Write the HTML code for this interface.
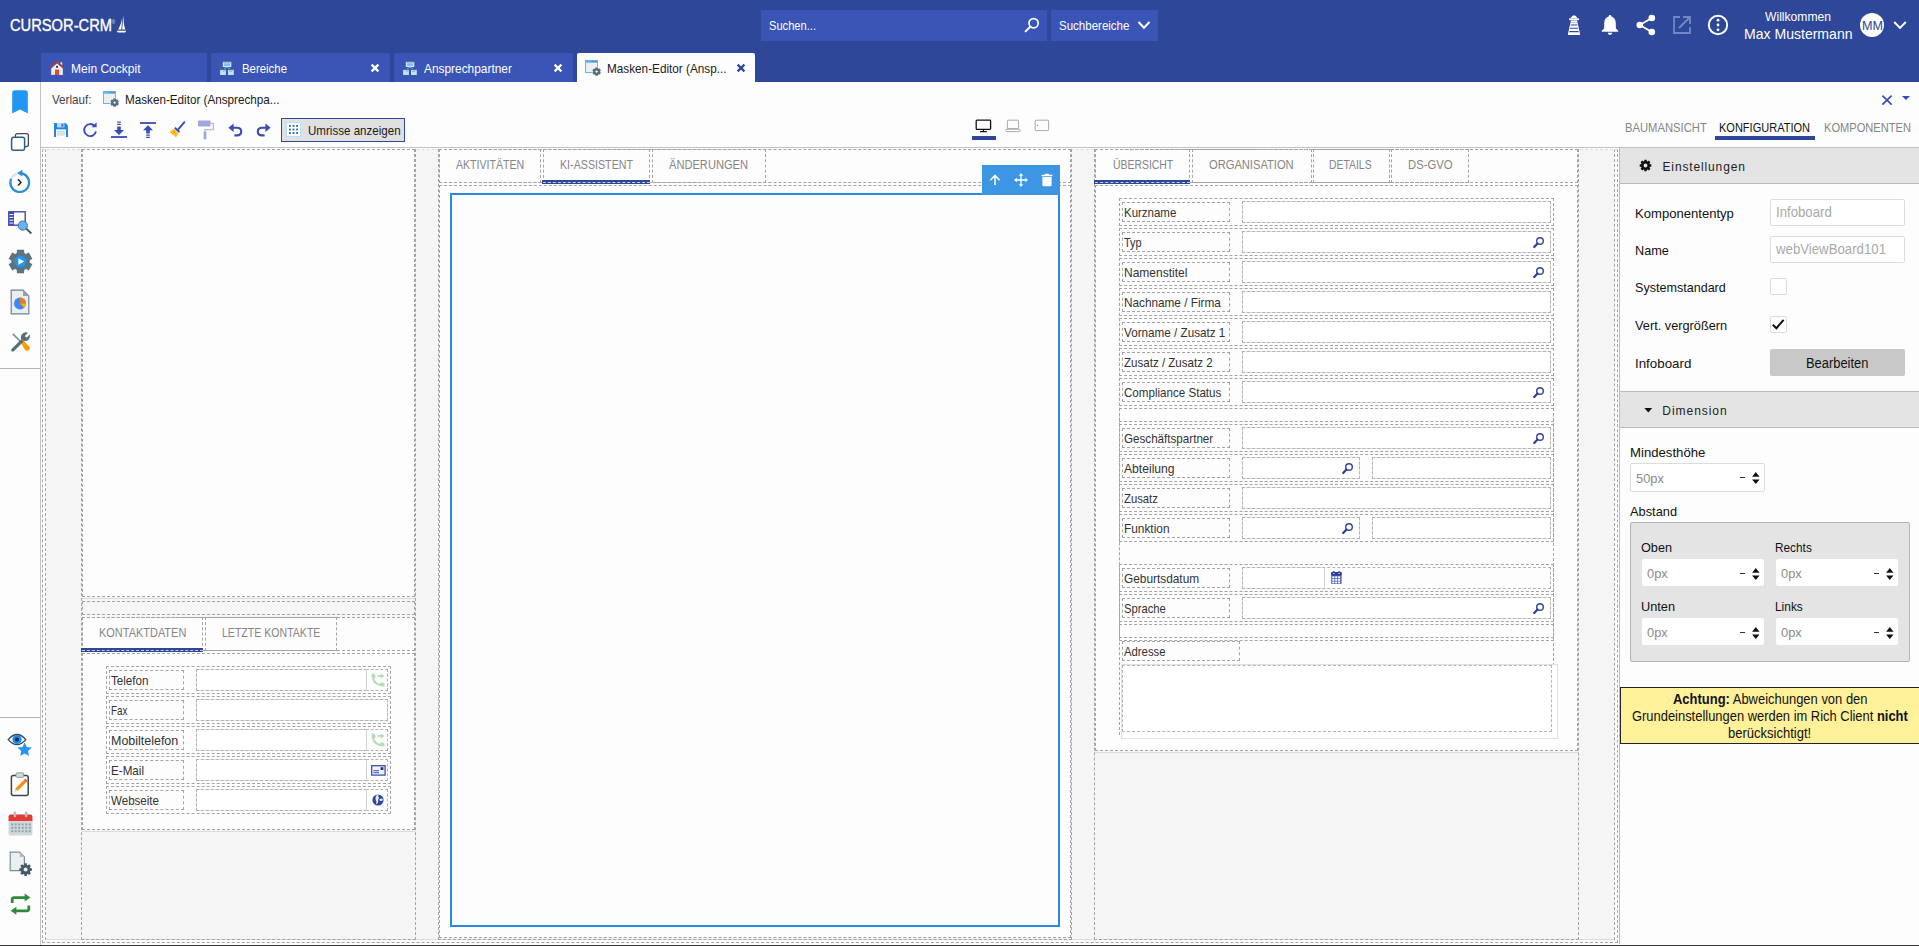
<!DOCTYPE html>
<html lang="de"><head><meta charset="utf-8"><title>CURSOR-CRM Masken-Editor</title><style>
html,body{margin:0;padding:0;}
body{width:1919px;height:946px;overflow:hidden;position:relative;background:#fdfdfd;font-family:"Liberation Sans",sans-serif;}
div,span.t,svg{position:absolute;}
span.t{white-space:nowrap;}
svg{overflow:visible;}
</style></head><body>
<div style="left:0px;top:0px;width:1919px;height:82px;background:#2e4799;"></div>
<span class="t" style="top:13px;line-height:26px;height:26px;font-size:16px;color:#fff;transform:scaleX(0.9181);transform-origin:0 50%;left:9.6px;-webkit-text-stroke:0.35px #fff;">CURSOR-CRM</span>
<span class="t" style="top:12px;line-height:20px;height:20px;font-size:5px;color:#dfe4f5;left:111.5px;">®</span>
<svg style="left:116px;top:14px;" width="11" height="20" viewBox="0 0 11 20"><g transform="translate(1.6 0) skewX(-5) scale(0.82 1)"><path d="M7.2 0.5 C7.6 6 8.8 11 11 15.6 L7.2 15.6 Z M6.2 3.5 L6.2 15.6 L2.4 15.6 C4.4 12 5.6 8 6.2 3.5 Z M0.8 16.8 L12.4 16.8 L11 18.6 L2.2 18.6 Z" fill="#fff"/></g></svg>
<div style="left:761px;top:10px;width:286px;height:31px;background:#3a55b6;"></div>
<span class="t" style="top:16px;line-height:20px;height:20px;font-size:13px;color:#fff;transform:scaleX(0.8557);transform-origin:0 50%;left:769px;">Suchen...</span>
<svg style="left:1024px;top:17px;" width="16" height="16" viewBox="0 0 16 16"><circle cx="9.6" cy="6.2" r="4.6" fill="none" stroke="#fff" stroke-width="1.7"/><path d="M6.4 9.6 L1.6 14.4" stroke="#fff" stroke-width="2" stroke-linecap="round"/></svg>
<div style="left:1051px;top:10px;width:107px;height:31px;background:#3a55b6;"></div>
<span class="t" style="top:16px;line-height:20px;height:20px;font-size:13px;color:#fff;transform:scaleX(0.8855);transform-origin:0 50%;left:1059px;">Suchbereiche</span>
<svg style="left:1137px;top:20px;" width="14" height="10" viewBox="0 0 14 10"><path d="M1.5 2 L7 7.8 L12.5 2" fill="none" stroke="#fff" stroke-width="2"/></svg>
<svg style="left:1566px;top:14px;" width="16" height="22" viewBox="0 0 16 22"><path d="M4.4 4.2 Q8 -1.8 11.6 4.2 Z" fill="#fff"/><rect x="3" y="4.4" width="10" height="1.6" fill="#fff"/><rect x="4.6" y="6.4" width="6.8" height="2.2" fill="#fff"/><path d="M4.4 8.8 H11.6 L14.2 21 H1.8 Z" fill="#fff"/><path d="M4.6 11 H11.4 M4 14.2 H12 M3.4 17.6 H12.6" stroke="#2e4799" stroke-width="1.1"/></svg>
<svg style="left:1600px;top:14px;" width="20" height="22" viewBox="0 0 20 22"><path d="M10 1 C10.9 1 11.4 1.6 11.4 2.6 C14.4 3.4 15.8 6 15.8 9.4 V14.2 L18.2 16.8 V17.8 H1.8 V16.8 L4.2 14.2 V9.4 C4.2 6 5.6 3.4 8.6 2.6 C8.6 1.6 9.1 1 10 1 Z M7.8 18.8 H12.2 C12.2 20.1 11.2 21 10 21 C8.8 21 7.8 20.1 7.8 18.8Z" fill="#fff"/></svg>
<svg style="left:1635px;top:13px;" width="22" height="24" viewBox="0 0 22 24"><circle cx="4.8" cy="12" r="3.3" fill="#fff"/><circle cx="16.8" cy="5" r="3.3" fill="#fff"/><circle cx="16.8" cy="19" r="3.3" fill="#fff"/><path d="M4.8 12 L16.8 5 M4.8 12 L16.8 19" stroke="#fff" stroke-width="1.8"/></svg>
<svg style="left:1672px;top:15px;" width="20" height="20" viewBox="0 0 20 20"><path d="M8 2 H2 V18 H18 V12" fill="none" stroke="#7486c6" stroke-width="1.8"/><path d="M11 2 H18 V9 M18 2 L7 13" fill="none" stroke="#7486c6" stroke-width="1.8"/></svg>
<svg style="left:1707px;top:14px;" width="22" height="22" viewBox="0 0 22 22"><circle cx="11" cy="11" r="9.2" fill="none" stroke="#fff" stroke-width="1.9"/><circle cx="11" cy="6.2" r="1.4" fill="#fff"/><circle cx="11" cy="11" r="1.4" fill="#fff"/><circle cx="11" cy="15.8" r="1.4" fill="#fff"/></svg>
<span class="t" style="top:7px;line-height:20px;height:20px;font-size:13px;color:#fff;transform:scaleX(0.9324);transform-origin:0 50%;left:1765.2px;">Willkommen</span>
<span class="t" style="top:21px;line-height:26px;height:26px;font-size:15px;color:#fff;transform:scaleX(0.9364);transform-origin:0 50%;left:1743.55px;">Max Mustermann</span>
<div style="left:1860px;top:13px;width:24px;height:24px;background:#fff;border-radius:50%;"></div>
<span class="t" style="top:16px;line-height:20px;height:20px;font-size:13px;color:#2e4799;transform:scaleX(0.9696);transform-origin:0 50%;left:1861.5px;">MM</span>
<svg style="left:1893px;top:20px;" width="14" height="10" viewBox="0 0 14 10"><path d="M1.2 2 L7 7.8 L12.8 2" fill="none" stroke="#fff" stroke-width="1.9"/></svg>
<div style="left:41px;top:53px;width:166px;height:29px;background:#3a55b6;border-radius:2px 2px 0 0;"></div>
<div style="left:211px;top:53px;width:179px;height:29px;background:#3a55b6;border-radius:2px 2px 0 0;"></div>
<div style="left:394px;top:53px;width:179px;height:29px;background:#3a55b6;border-radius:2px 2px 0 0;"></div>
<div style="left:577px;top:53px;width:178px;height:29px;background:#fdfdfd;border-radius:2px 2px 0 0;"></div>
<svg style="left:49px;top:60px;" width="16" height="16" viewBox="0 0 16 16"><path d="M11.4 2.2 H13.2 V5.4 L11.4 3.8Z" fill="#e8eaf6"/><path d="M2.2 8.4 L8 3.2 L13.8 8.4 V15 H2.2Z" fill="#eceff8"/><rect x="2.2" y="13.6" width="11.6" height="1.4" fill="#d6daec"/><path d="M8 0.8 L0.8 7.4 L1.8 8.5 L8 2.9 L14.2 8.5 L15.2 7.4 Z" fill="#c0392b"/><rect x="6" y="9.6" width="4" height="5.4" fill="#e64a19"/><rect x="7" y="5.8" width="2" height="2" fill="#0d47a1"/></svg>
<span class="t" style="top:59px;line-height:20px;height:20px;font-size:13px;color:#fff;transform:scaleX(0.925);transform-origin:0 50%;left:71px;">Mein Cockpit</span>
<svg style="left:220px;top:61px;" width="14" height="14" viewBox="0 0 14 14"><rect x="2.8" y="0.2" width="8.5" height="5.7" rx="0.5" fill="#d4eaff"/><rect x="2.8" y="0.2" width="8.5" height="1.1" fill="#4d6069"/><rect x="3.8" y="1.9" width="6.5" height="3" fill="#90caf9"/><rect x="4.2" y="3.5" width="5.7" height="0.9" fill="#64b5f6"/><path d="M7 6 L4 7.8 M7 6 L10 7.8" stroke="#64b5f6" stroke-width="0.9"/><rect x="0.1" y="8.1" width="5.8" height="5.8" rx="0.5" fill="#c4e2fc"/><rect x="0.1" y="8.1" width="5.8" height="1" fill="#4d6069"/><rect x="3" y="9.7" width="1.8" height="1" fill="#64b5f6"/><rect x="8" y="8.1" width="5.8" height="5.8" rx="0.5" fill="#c4e2fc"/><rect x="8" y="8.1" width="5.8" height="1" fill="#4d6069"/><rect x="9.2" y="9.7" width="3" height="1" fill="#64b5f6"/></svg>
<span class="t" style="top:59px;line-height:20px;height:20px;font-size:13px;color:#fff;transform:scaleX(0.877);transform-origin:0 50%;left:242px;">Bereiche</span>
<svg style="left:403px;top:61px;" width="14" height="14" viewBox="0 0 14 14"><rect x="2.8" y="0.2" width="8.5" height="5.7" rx="0.5" fill="#d4eaff"/><rect x="2.8" y="0.2" width="8.5" height="1.1" fill="#4d6069"/><rect x="3.8" y="1.9" width="6.5" height="3" fill="#90caf9"/><rect x="4.2" y="3.5" width="5.7" height="0.9" fill="#64b5f6"/><path d="M7 6 L4 7.8 M7 6 L10 7.8" stroke="#64b5f6" stroke-width="0.9"/><rect x="0.1" y="8.1" width="5.8" height="5.8" rx="0.5" fill="#c4e2fc"/><rect x="0.1" y="8.1" width="5.8" height="1" fill="#4d6069"/><rect x="3" y="9.7" width="1.8" height="1" fill="#64b5f6"/><rect x="8" y="8.1" width="5.8" height="5.8" rx="0.5" fill="#c4e2fc"/><rect x="8" y="8.1" width="5.8" height="1" fill="#4d6069"/><rect x="9.2" y="9.7" width="3" height="1" fill="#64b5f6"/></svg>
<span class="t" style="top:59px;line-height:20px;height:20px;font-size:13px;color:#fff;transform:scaleX(0.9146);transform-origin:0 50%;left:424px;">Ansprechpartner</span>
<svg style="left:370px;top:63px;" width="10" height="10" viewBox="0 0 10 10"><path d="M1.6 1.6 L8.4 8.4 M8.4 1.6 L1.6 8.4" stroke="#fff" stroke-width="2.2"/></svg>
<svg style="left:553px;top:63px;" width="10" height="10" viewBox="0 0 10 10"><path d="M1.6 1.6 L8.4 8.4 M8.4 1.6 L1.6 8.4" stroke="#fff" stroke-width="2.2"/></svg>
<svg style="left:736px;top:63px;" width="10" height="10" viewBox="0 0 10 10"><path d="M1.6 1.6 L8.4 8.4 M8.4 1.6 L1.6 8.4" stroke="#2e4799" stroke-width="2.2"/></svg>
<svg style="left:585px;top:60px;" width="17" height="17" viewBox="0 0 17 17"><rect x="0.5" y="0.5" width="12" height="12" fill="#eceff1" stroke="#64b5f6" stroke-width="1"/><rect x="0" y="0" width="13" height="2.8" fill="#64b5f6"/><rect x="10.4" y="0.8" width="1.3" height="1.3" fill="#f44336"/><rect x="8.4" y="0.9" width="1.1" height="1.1" fill="#1e88e5"/><rect x="6.6" y="0.9" width="1.1" height="1.1" fill="#1e88e5"/><path d="M10.01 8.26 L10.27 7.09 L12.93 7.09 L13.19 8.26 L13.70 8.55 L14.84 8.19 L16.17 10.50 L15.29 11.31 L15.29 11.89 L16.17 12.70 L14.84 15.01 L13.70 14.65 L13.19 14.94 L12.93 16.11 L10.27 16.11 L10.01 14.94 L9.50 14.65 L8.36 15.01 L7.03 12.70 L7.91 11.89 L7.91 11.31 L7.03 10.50 L8.36 8.19 L9.50 8.55Z" fill="#546e7a" stroke="#fdfdfd" stroke-width="0.6"/><circle cx="11.6" cy="11.6" r="1.15" fill="#fdfdfd"/></svg>
<span class="t" style="top:59px;line-height:20px;height:20px;font-size:13px;color:#222;transform:scaleX(0.9038);transform-origin:0 50%;left:607px;">Masken-Editor (Ansp...</span>
<div style="left:0px;top:82px;width:1919px;height:864px;background:#fdfdfd;"></div>
<div style="left:40px;top:82px;width:1px;height:864px;background:#c2c2c2;"></div>
<div style="left:0px;top:945px;width:1919px;height:1px;background:#333;"></div>
<div style="left:41px;top:147px;width:1878px;height:1px;background:#c2c2c2;"></div>
<div style="left:0px;top:368px;width:40px;height:1px;background:#b4b4b4;"></div>
<div style="left:0px;top:717px;width:40px;height:1px;background:#b4b4b4;"></div>
<svg style="left:12px;top:90px;" width="16" height="24" viewBox="0 0 16 24"><path d="M0.2 3 Q0.2 0.2 3 0.2 H13 Q15.8 0.2 15.8 3 V23.6 L8 19.6 L0.2 23.6Z" fill="#2196f3"/></svg>
<svg style="left:10px;top:132px;" width="20" height="20" viewBox="0 0 20 20"><rect x="5.4" y="1.6" width="13" height="13" rx="2" fill="none" stroke="#4a4a4a" stroke-width="1.3"/><rect x="1.6" y="5.2" width="13" height="13" rx="2" fill="#fdfdfd" stroke="#2c5d8f" stroke-width="1.5"/></svg>
<svg style="left:8px;top:169px;" width="24" height="25" viewBox="0 0 24 25"><path d="M11.2 4.2 A9.4 9.4 0 1 1 3.2 9.6" fill="none" stroke="#2a8fd4" stroke-width="2.2"/><path d="M3.2 9.6 A9.4 9.4 0 0 1 9 4.6" fill="none" stroke="#cfe6f7" stroke-width="2.2"/><path d="M14.4 0.8 L9 4 L14.4 7.4 Z" fill="#2a8fd4"/><path d="M10 10.2 L13 13.4 L10 16.6" fill="none" stroke="#222" stroke-width="1.4"/></svg>
<svg style="left:8px;top:211px;" width="25" height="24" viewBox="0 0 25 24"><rect x="0.8" y="0.8" width="16.4" height="13.4" fill="#fdfdfd" stroke="#3f48b5" stroke-width="1.4"/><rect x="0.8" y="0.8" width="5.2" height="13.4" fill="#3f48b5"/><path d="M1.4 3.6 H5.4 M1.4 6.4 H5.4 M1.4 9.2 H5.4 M1.4 12 H5.4" stroke="#fff" stroke-width="1"/><path d="M18 17.6 L23.4 22.4" stroke="#455a64" stroke-width="2"/><circle cx="14.8" cy="14.6" r="4.6" fill="#64b5f6" stroke="#455a64" stroke-width="0.8"/></svg>
<svg style="left:7.5px;top:249px;" width="25" height="25" viewBox="0 0 25 25"><path d="M8.76 4.10 L8.97 0.82 L16.03 0.82 L16.24 4.10 L17.91 5.06 L20.85 3.61 L24.38 9.71 L21.65 11.54 L21.65 13.46 L24.38 15.29 L20.85 21.39 L17.91 19.94 L16.24 20.90 L16.03 24.18 L8.97 24.18 L8.76 20.90 L7.09 19.94 L4.15 21.39 L0.62 15.29 L3.35 13.46 L3.35 11.54 L0.62 9.71 L4.15 3.61 L7.09 5.06Z" fill="#5a7482"/><circle cx="12.5" cy="12.5" r="5.8" fill="#2196f3"/><path d="M10.4 9.2 L16.2 12.5 L10.4 15.8Z" fill="#fff"/></svg>
<svg style="left:10px;top:289px;" width="20" height="26" viewBox="0 0 20 26"><path d="M1.2 1.2 H13 L18.8 7 V24.8 H1.2Z" fill="#e8eef4" stroke="#6d8496" stroke-width="1.2"/><path d="M13 1.2 V7 H18.8Z" fill="#90a4ae"/><circle cx="10" cy="14.6" r="6" fill="#4285f4"/><path d="M10 14.6 V8.6 A6 6 0 0 1 16 14.6Z" fill="#e67e22"/><path d="M10 14.6 H16 A6 6 0 0 1 14.2 18.8Z" fill="#f4b400"/></svg>
<svg style="left:10px;top:331px;" width="21" height="22" viewBox="0 0 21 22"><path d="M2.2 3.4 L3.4 2.2 L10.6 9.4 L9.4 10.6Z" fill="#78909c"/><path d="M9.6 10 L11.8 7.8 L19.4 15.4 Q20.4 17.6 18.8 19.2 Q17.2 20.4 15.2 19.2Z" fill="#ffa000"/><path d="M1.6 18 L11.4 8.2 L13.6 10.4 L3.8 20.2 Q2.4 21 1.4 20 Q0.8 19 1.6 18Z" fill="#546e7a"/><path d="M11 8 Q10.2 4 13.4 2 Q15.6 0.8 18 1.8 L14.8 5 L16.6 6.8 L19.8 3.6 Q20.8 6.6 18.6 8.8 Q16.6 10.6 13.6 9.8Z" fill="#546e7a"/></svg>
<svg style="left:7px;top:731px;" width="27" height="26" viewBox="0 0 27 26"><path d="M1.2 8.6 Q10 -1.6 18.8 8.6 Q10 18.6 1.2 8.6Z" fill="#fdfdfd" stroke="#37474f" stroke-width="1.3"/><circle cx="10" cy="8.4" r="4.6" fill="#1e88e5"/><circle cx="10" cy="8.4" r="2" fill="#0d2b4a"/><path d="M17.6 11.4 L19.7 16 L24.8 16.6 L21 20 L22 25 L17.6 22.5 L13.2 25 L14.2 20 L10.4 16.6 L15.5 16Z" fill="#2196f3"/></svg>
<svg style="left:10px;top:772px;" width="20" height="25" viewBox="0 0 20 25"><rect x="1.4" y="3.6" width="16.8" height="19.8" rx="2" fill="#fdfdfd" stroke="#37474f" stroke-width="1.5"/><rect x="6" y="0.8" width="7.6" height="4.6" rx="1.2" fill="#cfd8dc" stroke="#78909c" stroke-width="0.8"/><path d="M4.6 19.6 L5.4 16.6 L14.2 7.8 L16.4 10 L7.6 18.8Z" fill="#fb8c00"/><path d="M4.6 19.6 L5.4 16.6 L7.6 18.8Z" fill="#ffe0b2"/><path d="M14.2 7.8 L15.2 6.8 L17.4 9 L16.4 10Z" fill="#e53935"/></svg>
<svg style="left:8px;top:811px;" width="25" height="25" viewBox="0 0 25 25"><rect x="0.6" y="3.4" width="23.8" height="21" rx="2.2" fill="#cfd8dc"/><path d="M0.6 10 V5.6 Q0.6 3.4 2.8 3.4 H22.2 Q24.4 3.4 24.4 5.6 V10Z" fill="#e53935"/><rect x="5.6" y="0.6" width="2.6" height="5.6" rx="1.2" fill="#b0bec5"/><rect x="16.8" y="0.6" width="2.6" height="5.6" rx="1.2" fill="#b0bec5"/><rect x="3.2" y="12.4" width="2" height="2" fill="#90a4ae"/><rect x="6.7" y="12.4" width="2" height="2" fill="#90a4ae"/><rect x="10.2" y="12.4" width="2" height="2" fill="#90a4ae"/><rect x="13.7" y="12.4" width="2" height="2" fill="#90a4ae"/><rect x="17.2" y="12.4" width="2" height="2" fill="#90a4ae"/><rect x="20.7" y="12.4" width="2" height="2" fill="#90a4ae"/><rect x="3.2" y="15.8" width="2" height="2" fill="#90a4ae"/><rect x="6.7" y="15.8" width="2" height="2" fill="#90a4ae"/><rect x="10.2" y="15.8" width="2" height="2" fill="#90a4ae"/><rect x="13.7" y="15.8" width="2" height="2" fill="#90a4ae"/><rect x="17.2" y="15.8" width="2" height="2" fill="#90a4ae"/><rect x="20.7" y="15.8" width="2" height="2" fill="#90a4ae"/><rect x="3.2" y="19.2" width="2" height="2" fill="#90a4ae"/><rect x="6.7" y="19.2" width="2" height="2" fill="#90a4ae"/><rect x="10.2" y="19.2" width="2" height="2" fill="#90a4ae"/><rect x="13.7" y="19.2" width="2" height="2" fill="#90a4ae"/><rect x="17.2" y="19.2" width="2" height="2" fill="#90a4ae"/><rect x="20.7" y="19.2" width="2" height="2" fill="#90a4ae"/></svg>
<svg style="left:9px;top:851px;" width="25" height="26" viewBox="0 0 25 26"><path d="M1.2 1.2 H10.6 L15.4 6 V19.6 H1.2Z" fill="#eceff1" stroke="#78909c" stroke-width="1.2"/><path d="M10.6 1.2 V6 H15.4Z" fill="#b0bec5"/><g transform="translate(16.6 18.6)"><path d="M-1.33 -4.72 L-1.25 -6.28 L1.25 -6.28 L1.33 -4.72 L2.39 -4.28 L3.56 -5.32 L5.32 -3.56 L4.28 -2.39 L4.72 -1.33 L6.28 -1.25 L6.28 1.25 L4.72 1.33 L4.28 2.39 L5.32 3.56 L3.56 5.32 L2.39 4.28 L1.33 4.72 L1.25 6.28 L-1.25 6.28 L-1.33 4.72 L-2.39 4.28 L-3.56 5.32 L-5.32 3.56 L-4.28 2.39 L-4.72 1.33 L-6.28 1.25 L-6.28 -1.25 L-4.72 -1.33 L-4.28 -2.39 L-5.32 -3.56 L-3.56 -5.32 L-2.39 -4.28Z" fill="#455a64"/><circle r="2" fill="#eceff1"/></g></svg>
<svg style="left:9px;top:893px;" width="23" height="23" viewBox="0 0 23 23"><path d="M3.2 10 V6.6 Q3.2 4.6 5.2 4.6 H17" fill="none" stroke="#2e8b3a" stroke-width="2.8"/><path d="M15.6 0.6 L21.4 4.6 L15.6 8.6Z" fill="#2e8b3a"/><path d="M19.8 12.4 V15.8 Q19.8 17.8 17.8 17.8 H6" fill="none" stroke="#2e8b3a" stroke-width="2.8"/><path d="M7.4 13.8 L1.6 17.8 L7.4 21.8Z" fill="#2e8b3a"/></svg>
<span class="t" style="top:90px;line-height:20px;height:20px;font-size:13px;color:#444;transform:scaleX(0.8937);transform-origin:0 50%;left:52px;">Verlauf:</span>
<svg style="left:103px;top:91px;" width="17" height="17" viewBox="0 0 17 17"><rect x="0.5" y="0.5" width="12" height="12" fill="#eceff1" stroke="#64b5f6" stroke-width="1"/><rect x="0" y="0" width="13" height="2.8" fill="#64b5f6"/><rect x="10.4" y="0.8" width="1.3" height="1.3" fill="#f44336"/><rect x="8.4" y="0.9" width="1.1" height="1.1" fill="#1e88e5"/><rect x="6.6" y="0.9" width="1.1" height="1.1" fill="#1e88e5"/><path d="M10.01 8.26 L10.27 7.09 L12.93 7.09 L13.19 8.26 L13.70 8.55 L14.84 8.19 L16.17 10.50 L15.29 11.31 L15.29 11.89 L16.17 12.70 L14.84 15.01 L13.70 14.65 L13.19 14.94 L12.93 16.11 L10.27 16.11 L10.01 14.94 L9.50 14.65 L8.36 15.01 L7.03 12.70 L7.91 11.89 L7.91 11.31 L7.03 10.50 L8.36 8.19 L9.50 8.55Z" fill="#546e7a" stroke="#fdfdfd" stroke-width="0.6"/><circle cx="11.6" cy="11.6" r="1.15" fill="#fdfdfd"/></svg>
<span class="t" style="top:90px;line-height:20px;height:20px;font-size:13px;color:#1a1a1a;transform:scaleX(0.899);transform-origin:0 50%;left:125px;">Masken-Editor (Ansprechpa...</span>
<svg style="left:1881px;top:94px;" width="12" height="12" viewBox="0 0 12 12"><path d="M1.4 1.6 L10.6 10.6 M10.6 1.6 L1.4 10.6" stroke="#3848b8" stroke-width="1.6"/></svg>
<svg style="left:1902px;top:96px;" width="8" height="4" viewBox="0 0 8 4"><path d="M0 0 H8 L4 4Z" fill="#3848b8"/></svg>
<svg style="left:54px;top:123px;" width="14" height="14" viewBox="0 0 14 14"><path d="M0 0 H11.6 L14 2.4 V14 H0Z" fill="#1e88e5"/><rect x="3" y="0" width="7.4" height="4.4" fill="#bbdefb"/><rect x="7.4" y="0.6" width="2" height="3.2" fill="#5c6bc0"/><rect x="2" y="6.4" width="10" height="7.6" fill="#fff"/><path d="M3 8.4 H11 M3 10.2 H11 M3 12 H11" stroke="#b0bec5" stroke-width="0.8"/></svg>
<svg style="left:82px;top:121px;" width="16" height="17" viewBox="0 0 16 17"><path d="M12.6 5 A6 6 0 1 0 14 10.6" fill="none" stroke="#3a4bb5" stroke-width="1.9"/><path d="M9.6 6.2 H14.6 V1.2Z" fill="#3a4bb5"/></svg>
<svg style="left:111px;top:121px;" width="16" height="18" viewBox="0 0 16 18"><path d="M0 16 H16" stroke="#3a4bb5" stroke-width="1.8"/><path d="M6.2 5.6 H9.8 V9 H13 L8 14 L3 9 H6.2Z" fill="#3a4bb5"/><path d="M6.2 1.2 H9.8 M6.2 3.4 H9.8" stroke="#3a4bb5" stroke-width="1.2"/></svg>
<svg style="left:140px;top:121px;" width="16" height="18" viewBox="0 0 16 18"><path d="M0 2 H16" stroke="#3a4bb5" stroke-width="1.8"/><path d="M8 4.2 L13 9.2 H9.8 V12.4 H6.2 V9.2 H3Z" fill="#3a4bb5"/><path d="M6.2 14.2 H9.8 M6.2 16.4 H9.8" stroke="#3a4bb5" stroke-width="1.2"/></svg>
<svg style="left:169px;top:121px;" width="17" height="18" viewBox="0 0 17 18"><path d="M15.4 1.2 L9.2 8.4" stroke="#3a4bb5" stroke-width="1.9" stroke-linecap="round"/><path d="M6.6 6 L11.2 10.4 L9.8 11.8 L5.2 7.4Z" fill="#3a4bb5"/><path d="M4.8 7.8 L9.4 12.2 L7 16.4 L0.6 10.4Z" fill="#fbc02d"/><path d="M2.4 11.4 L4 13 M4.2 10 L6.4 12.2" stroke="#f57f17" stroke-width="0.8"/></svg>
<svg style="left:197px;top:120px;" width="18" height="20" viewBox="0 0 18 20"><rect x="1" y="0.6" width="12.6" height="6" rx="1" fill="#9fa8da"/><path d="M13.6 3.4 H16.4 V9.6 H8 V12" fill="none" stroke="#b4bbe6" stroke-width="1.4"/><rect x="6.6" y="11.4" width="2.8" height="8" rx="1" fill="#9fa8da"/></svg>
<svg style="left:228px;top:123px;" width="15" height="14" viewBox="0 0 15 14"><path d="M4.6 4.8 H9 Q13.2 4.8 13.2 8.6 Q13.2 12.4 9 12.4 H6.4" fill="none" stroke="#3a4bb5" stroke-width="2.1"/><path d="M5.6 0.6 V9 L0.4 4.8Z" fill="#3a4bb5"/></svg>
<svg style="left:256px;top:123px;" width="15" height="14" viewBox="0 0 15 14"><path d="M10.4 4.8 H6 Q1.8 4.8 1.8 8.6 Q1.8 12.4 6 12.4 H8.6" fill="none" stroke="#3a4bb5" stroke-width="2.1"/><path d="M9.4 0.6 V9 L14.6 4.8Z" fill="#3a4bb5"/></svg>
<div style="left:281px;top:118px;width:124px;height:24px;background:#e0e0e0;border:1px solid #2e4799;box-sizing:border-box;"></div>
<svg style="left:286px;top:122px;" width="15" height="15" viewBox="0 0 15 15"><rect x="0.5" y="0.5" width="14" height="14" fill="#fff" stroke="#bbdefb" stroke-width="1"/><rect x="3.0" y="3.0" width="1.8" height="1.8" fill="#1565c0"/><rect x="6.6" y="3.0" width="1.8" height="1.8" fill="#1565c0"/><rect x="10.2" y="3.0" width="1.8" height="1.8" fill="#1565c0"/><rect x="3.0" y="6.6" width="1.8" height="1.8" fill="#1565c0"/><rect x="6.6" y="6.6" width="1.8" height="1.8" fill="#1565c0"/><rect x="10.2" y="6.6" width="1.8" height="1.8" fill="#1565c0"/><rect x="3.0" y="10.2" width="1.8" height="1.8" fill="#1565c0"/><rect x="6.6" y="10.2" width="1.8" height="1.8" fill="#1565c0"/><rect x="10.2" y="10.2" width="1.8" height="1.8" fill="#1565c0"/></svg>
<span class="t" style="top:121px;line-height:20px;height:20px;font-size:13px;color:#1a1a1a;transform:scaleX(0.89);transform-origin:0 50%;left:308px;">Umrisse anzeigen</span>
<svg style="left:975px;top:119px;" width="17" height="14" viewBox="0 0 17 14"><rect x="1.2" y="1.2" width="14.4" height="9.2" rx="0.8" fill="none" stroke="#111" stroke-width="1.3"/><path d="M8.4 10.4 V12.4 M5 12.6 H11.8" stroke="#111" stroke-width="1.2"/></svg>
<div style="left:972px;top:136px;width:24px;height:4px;background:#2e4799;"></div>
<svg style="left:1005px;top:119px;" width="16" height="14" viewBox="0 0 16 14"><rect x="2.4" y="1.2" width="11.2" height="8.4" rx="0.6" fill="none" stroke="#aaa" stroke-width="1"/><rect x="0.8" y="10.2" width="14.4" height="2.4" rx="1.2" fill="none" stroke="#aaa" stroke-width="1"/></svg>
<svg style="left:1034px;top:119px;" width="16" height="14" viewBox="0 0 16 14"><rect x="1.2" y="1.2" width="13.4" height="10.4" rx="0.8" fill="none" stroke="#aaa" stroke-width="1"/><circle cx="3.4" cy="6.4" r="0.6" fill="#888"/></svg>
<span class="t" style="top:118px;line-height:20px;height:20px;font-size:12.5px;color:#858585;transform:scaleX(0.8991);transform-origin:0 50%;left:1624.7px;">BAUMANSICHT</span>
<span class="t" style="top:118px;line-height:20px;height:20px;font-size:12.5px;color:#111;transform:scaleX(0.8814);transform-origin:0 50%;left:1719.3px;">KONFIGURATION</span>
<span class="t" style="top:118px;line-height:20px;height:20px;font-size:12.5px;color:#858585;transform:scaleX(0.8884);transform-origin:0 50%;left:1823.6px;">KOMPONENTEN</span>
<div style="left:1715px;top:136px;width:100px;height:4px;background:#2e4799;"></div>
<div style="left:46px;top:150px;width:1568px;height:789px;background:#f5f5f5;"></div>
<div style="left:42px;top:149px;width:1576px;height:794px;border:1px dashed #a4a4a4;box-sizing:border-box;border-top-color:#dcdcdc;"></div>
<div style="left:45px;top:149px;width:1570px;height:791px;border:1px dashed #a4a4a4;box-sizing:border-box;border-top-color:transparent;"></div>
<div style="left:46px;top:939px;width:1568px;height:1px;background:#dcdcdc;"></div>
<div style="left:81px;top:149px;width:335px;height:791px;border:1px dashed #a4a4a4;box-sizing:border-box;"></div>
<div style="left:82px;top:149px;width:333px;height:448px;border:1px dashed #a4a4a4;box-sizing:border-box;background:#fdfdfd;"></div>
<div style="left:82px;top:598px;width:333px;height:1px;background:#dcdcdc;"></div>
<div style="left:82px;top:601px;width:333px;height:14px;border:1px dashed #a4a4a4;box-sizing:border-box;"></div>
<div style="left:82px;top:617px;width:333px;height:213px;background:#fdfdfd;"></div>
<div style="left:82px;top:617px;width:333px;height:34px;border:1px dashed #a4a4a4;box-sizing:border-box;background:#fdfdfd;"></div>
<div style="left:82px;top:617px;width:121px;height:34px;border:1px dashed #a4a4a4;box-sizing:border-box;"></div>
<span class="t" style="top:623px;line-height:20px;height:20px;font-size:12.5px;color:#858585;transform:scaleX(0.877);transform-origin:0 50%;left:98.7px;">KONTAKTDATEN</span>
<div style="left:81px;top:648px;width:122px;height:4px;background:#2e4799;"></div>
<div style="left:82px;top:650px;width:121px;height:0px;border-top:1px dashed #c9cde0;"></div>
<div style="left:205px;top:617px;width:132px;height:34px;border:1px dashed #a4a4a4;box-sizing:border-box;"></div>
<span class="t" style="top:623px;line-height:20px;height:20px;font-size:12.5px;color:#858585;transform:scaleX(0.845);transform-origin:0 50%;left:221.6px;">LETZTE KONTAKTE</span>
<div style="left:82px;top:653px;width:333px;height:177px;border:1px dashed #a4a4a4;box-sizing:border-box;"></div>
<div style="left:82px;top:831px;width:333px;height:1px;background:#dcdcdc;"></div>
<div style="left:106px;top:666px;width:285px;height:28px;border:1px dashed #a4a4a4;box-sizing:border-box;"></div>
<div style="left:109px;top:670px;width:75px;height:20px;border:1px dashed #a4a4a4;box-sizing:border-box;"></div>
<span class="t" style="top:671px;line-height:20px;height:20px;font-size:13px;color:#333;transform:scaleX(0.8946);transform-origin:0 50%;left:111px;">Telefon</span>
<div style="left:196px;top:669px;width:171px;height:22px;background:#fff;border:1px solid #e2e2e2;box-sizing:border-box;"></div>
<div style="left:196px;top:669px;width:171px;height:22px;border:1px dashed #b4b4b4;box-sizing:border-box;"></div>
<div style="left:366px;top:669px;width:22px;height:22px;border-left:1px solid #d2d2d2;box-sizing:border-box;"></div>
<div style="left:366px;top:669px;width:22px;height:22px;border:1px dashed #b4b4b4;box-sizing:border-box;border-left-color:transparent;"></div>
<svg style="left:371px;top:672.6px;" width="14" height="14" viewBox="0 0 14 14"><path d="M0.6 0.8 H3.9 L4.7 4.3 L3 5.7 Q4.6 9.2 8.6 11 L10 9.3 L13.4 10.1 V13.4 Q7 13.6 3.4 10 Q0.4 6.8 0.6 0.8Z" fill="#b4ddb6"/><path d="M6.6 3 H10.4" stroke="#b4ddb6" stroke-width="1.7"/><path d="M9.8 0.5 L13.4 3 L9.8 5.5Z" fill="#b4ddb6"/></svg>
<div style="left:106px;top:696px;width:285px;height:28px;border:1px dashed #a4a4a4;box-sizing:border-box;"></div>
<div style="left:109px;top:700px;width:75px;height:20px;border:1px dashed #a4a4a4;box-sizing:border-box;"></div>
<span class="t" style="top:701px;line-height:20px;height:20px;font-size:13px;color:#333;transform:scaleX(0.7568);transform-origin:0 50%;left:111px;">Fax</span>
<div style="left:196px;top:699px;width:192px;height:22px;background:#fff;border:1px solid #e2e2e2;box-sizing:border-box;"></div>
<div style="left:196px;top:699px;width:192px;height:22px;border:1px dashed #b4b4b4;box-sizing:border-box;"></div>
<div style="left:106px;top:726px;width:285px;height:28px;border:1px dashed #a4a4a4;box-sizing:border-box;"></div>
<div style="left:109px;top:730px;width:75px;height:20px;border:1px dashed #a4a4a4;box-sizing:border-box;"></div>
<span class="t" style="top:731px;line-height:20px;height:20px;font-size:13px;color:#333;transform:scaleX(0.9587);transform-origin:0 50%;left:111px;">Mobiltelefon</span>
<div style="left:196px;top:729px;width:171px;height:22px;background:#fff;border:1px solid #e2e2e2;box-sizing:border-box;"></div>
<div style="left:196px;top:729px;width:171px;height:22px;border:1px dashed #b4b4b4;box-sizing:border-box;"></div>
<div style="left:366px;top:729px;width:22px;height:22px;border-left:1px solid #d2d2d2;box-sizing:border-box;"></div>
<div style="left:366px;top:729px;width:22px;height:22px;border:1px dashed #b4b4b4;box-sizing:border-box;border-left-color:transparent;"></div>
<svg style="left:371px;top:732.6px;" width="14" height="14" viewBox="0 0 14 14"><path d="M0.6 0.8 H3.9 L4.7 4.3 L3 5.7 Q4.6 9.2 8.6 11 L10 9.3 L13.4 10.1 V13.4 Q7 13.6 3.4 10 Q0.4 6.8 0.6 0.8Z" fill="#b4ddb6"/><path d="M6.6 3 H10.4" stroke="#b4ddb6" stroke-width="1.7"/><path d="M9.8 0.5 L13.4 3 L9.8 5.5Z" fill="#b4ddb6"/></svg>
<div style="left:106px;top:756px;width:285px;height:28px;border:1px dashed #a4a4a4;box-sizing:border-box;"></div>
<div style="left:109px;top:760px;width:75px;height:20px;border:1px dashed #a4a4a4;box-sizing:border-box;"></div>
<span class="t" style="top:761px;line-height:20px;height:20px;font-size:13px;color:#333;transform:scaleX(0.8959);transform-origin:0 50%;left:111px;">E-Mail</span>
<div style="left:196px;top:759px;width:171px;height:22px;background:#fff;border:1px solid #e2e2e2;box-sizing:border-box;"></div>
<div style="left:196px;top:759px;width:171px;height:22px;border:1px dashed #b4b4b4;box-sizing:border-box;"></div>
<div style="left:366px;top:759px;width:22px;height:22px;border-left:1px solid #d2d2d2;box-sizing:border-box;"></div>
<div style="left:366px;top:759px;width:22px;height:22px;border:1px dashed #b4b4b4;box-sizing:border-box;border-left-color:transparent;"></div>
<svg style="left:370.5px;top:765px;" width="15" height="11" viewBox="0 0 15 11"><rect x="0.7" y="0.7" width="13.4" height="9.4" fill="#eef1fa" stroke="#3c50a8" stroke-width="1.3"/><rect x="9.6" y="2.2" width="2.8" height="2.8" fill="#24378c"/><path d="M2.4 5.6 H8 M2.4 7.6 H8" stroke="#5a6cbc" stroke-width="1.1"/></svg>
<div style="left:106px;top:786px;width:285px;height:28px;border:1px dashed #a4a4a4;box-sizing:border-box;"></div>
<div style="left:109px;top:790px;width:75px;height:20px;border:1px dashed #a4a4a4;box-sizing:border-box;"></div>
<span class="t" style="top:791px;line-height:20px;height:20px;font-size:13px;color:#333;transform:scaleX(0.8896);transform-origin:0 50%;left:111px;">Webseite</span>
<div style="left:196px;top:789px;width:171px;height:22px;background:#fff;border:1px solid #e2e2e2;box-sizing:border-box;"></div>
<div style="left:196px;top:789px;width:171px;height:22px;border:1px dashed #b4b4b4;box-sizing:border-box;"></div>
<div style="left:366px;top:789px;width:22px;height:22px;border-left:1px solid #d2d2d2;box-sizing:border-box;"></div>
<div style="left:366px;top:789px;width:22px;height:22px;border:1px dashed #b4b4b4;box-sizing:border-box;border-left-color:transparent;"></div>
<svg style="left:372px;top:794px;" width="12" height="12" viewBox="0 0 12 12"><circle cx="6" cy="6" r="5.6" fill="#2c479f"/><path d="M5 0.9 Q2.6 3 3.6 5.4 Q5 7.2 4 10.4 Q6.2 9.6 6.2 7.4 Q5.6 5.4 7 4 Q5.6 2.8 6.6 0.8 Z M7.4 5 Q9.4 3.8 10.8 5 Q11 7 9.2 7.2 Q7.4 7 7.4 5Z" fill="#eef1fa"/></svg>
<div style="left:438px;top:149px;width:634px;height:791px;border:1px dashed #a4a4a4;box-sizing:border-box;"></div>
<div style="left:439px;top:150px;width:632px;height:788px;background:#fdfdfd;"></div>
<div style="left:439px;top:149px;width:632px;height:34px;border:1px dashed #a4a4a4;box-sizing:border-box;background:#fdfdfd;"></div>
<div style="left:439px;top:149px;width:102px;height:34px;border:1px dashed #a4a4a4;box-sizing:border-box;"></div>
<span class="t" style="top:155px;line-height:20px;height:20px;font-size:12.5px;color:#858585;transform:scaleX(0.8465);transform-origin:0 50%;left:456px;">AKTIVITÄTEN</span>
<div style="left:543px;top:149px;width:107px;height:34px;border:1px dashed #a4a4a4;box-sizing:border-box;"></div>
<span class="t" style="top:155px;line-height:20px;height:20px;font-size:12.5px;color:#858585;transform:scaleX(0.8545);transform-origin:0 50%;left:559.7px;">KI-ASSISTENT</span>
<div style="left:542px;top:180px;width:108px;height:4px;background:#2e4799;"></div>
<div style="left:543px;top:182px;width:107px;height:0px;border-top:1px dashed #c9cde0;"></div>
<div style="left:652px;top:149px;width:114px;height:34px;border:1px dashed #a4a4a4;box-sizing:border-box;"></div>
<span class="t" style="top:155px;line-height:20px;height:20px;font-size:12.5px;color:#858585;transform:scaleX(0.8887);transform-origin:0 50%;left:669px;">ÄNDERUNGEN</span>
<div style="left:439px;top:185px;width:632px;height:753px;border:1px dashed #a4a4a4;box-sizing:border-box;"></div>
<div style="left:450px;top:193px;width:610px;height:734px;border:2px solid #2c88e0;box-sizing:border-box;background:#fdfdfd;"></div>
<div style="left:982px;top:165px;width:78px;height:30px;background:#3c96e3;"></div>
<svg style="left:989px;top:174px;" width="12" height="12" viewBox="0 0 12 12"><path d="M6 11 V1.6 M1.4 6.2 L6 1.4 L10.6 6.2" fill="none" stroke="#fff" stroke-width="1.5"/></svg>
<svg style="left:1014px;top:173px;" width="14" height="14" viewBox="0 0 14 14"><path d="M7 1.6 V12.4 M1.6 7 H12.4" stroke="#fff" stroke-width="1.3"/><path d="M7 0 L9.2 2.8 H4.8Z M7 14 L9.2 11.2 H4.8Z M0 7 L2.8 4.8 V9.2Z M14 7 L11.2 4.8 V9.2Z" fill="#fff"/></svg>
<svg style="left:1041px;top:173px;" width="12" height="14" viewBox="0 0 12 14"><path d="M0.6 1.8 H3.6 L4.4 0.8 H7.6 L8.4 1.8 H11.4 V3.2 H0.6Z M1.4 4 H10.6 V12 Q10.6 13.2 9.4 13.2 H2.6 Q1.4 13.2 1.4 12Z" fill="#fff"/></svg>
<div style="left:1094px;top:149px;width:485px;height:791px;border:1px dashed #a4a4a4;box-sizing:border-box;"></div>
<div style="left:1095px;top:150px;width:483px;height:601px;background:#fdfdfd;"></div>
<div style="left:1095px;top:149px;width:483px;height:34px;border:1px dashed #a4a4a4;box-sizing:border-box;background:#fdfdfd;"></div>
<div style="left:1095px;top:149px;width:95px;height:34px;border:1px dashed #a4a4a4;box-sizing:border-box;"></div>
<span class="t" style="top:155px;line-height:20px;height:20px;font-size:12.5px;color:#858585;transform:scaleX(0.8335);transform-origin:0 50%;left:1112.5px;">ÜBERSICHT</span>
<div style="left:1094px;top:180px;width:96px;height:4px;background:#2e4799;"></div>
<div style="left:1095px;top:182px;width:95px;height:0px;border-top:1px dashed #c9cde0;"></div>
<div style="left:1192px;top:149px;width:120px;height:34px;border:1px dashed #a4a4a4;box-sizing:border-box;"></div>
<span class="t" style="top:155px;line-height:20px;height:20px;font-size:12.5px;color:#858585;transform:scaleX(0.8913);transform-origin:0 50%;left:1208.6px;">ORGANISATION</span>
<div style="left:1313px;top:149px;width:77px;height:34px;border:1px dashed #a4a4a4;box-sizing:border-box;"></div>
<span class="t" style="top:155px;line-height:20px;height:20px;font-size:12.5px;color:#858585;transform:scaleX(0.8325);transform-origin:0 50%;left:1329.4px;">DETAILS</span>
<div style="left:1391px;top:149px;width:78px;height:34px;border:1px dashed #a4a4a4;box-sizing:border-box;"></div>
<span class="t" style="top:155px;line-height:20px;height:20px;font-size:12.5px;color:#858585;transform:scaleX(0.9045);transform-origin:0 50%;left:1407.6px;">DS-GVO</span>
<div style="left:1095px;top:185px;width:483px;height:566px;border:1px dashed #a4a4a4;box-sizing:border-box;"></div>
<div style="left:1095px;top:752px;width:483px;height:1px;background:#dcdcdc;"></div>
<div style="left:1119px;top:198px;width:0px;height:537px;border-left:1px dashed #a4a4a4;"></div>
<div style="left:1553px;top:198px;width:0px;height:483px;border-left:1px dashed #a4a4a4;"></div>
<div style="left:1119px;top:198px;width:435px;height:28px;border:1px dashed #a4a4a4;box-sizing:border-box;"></div>
<div style="left:1122px;top:202px;width:108px;height:20px;border:1px dashed #a4a4a4;box-sizing:border-box;"></div>
<span class="t" style="top:203px;line-height:20px;height:20px;font-size:13px;color:#333;transform:scaleX(0.8827);transform-origin:0 50%;left:1124px;">Kurzname</span>
<div style="left:1242px;top:201px;width:309px;height:22px;background:#fff;border:1px solid #e2e2e2;box-sizing:border-box;"></div>
<div style="left:1242px;top:201px;width:309px;height:22px;border:1px dashed #b4b4b4;box-sizing:border-box;"></div>
<div style="left:1119px;top:228px;width:435px;height:28px;border:1px dashed #a4a4a4;box-sizing:border-box;"></div>
<div style="left:1122px;top:232px;width:108px;height:20px;border:1px dashed #a4a4a4;box-sizing:border-box;"></div>
<span class="t" style="top:233px;line-height:20px;height:20px;font-size:13px;color:#333;transform:scaleX(0.8399);transform-origin:0 50%;left:1124px;">Typ</span>
<div style="left:1242px;top:231px;width:309px;height:22px;background:#fff;border:1px solid #e2e2e2;box-sizing:border-box;"></div>
<div style="left:1242px;top:231px;width:309px;height:22px;border:1px dashed #b4b4b4;box-sizing:border-box;"></div>
<svg style="left:1532.2px;top:235.7px;" width="12" height="12" viewBox="0 0 12 12"><circle cx="8" cy="5" r="3.3" fill="none" stroke="#33459e" stroke-width="1.4"/><path d="M5.5 7.5 L2.2 11" stroke="#2c3f98" stroke-width="2.2" stroke-linecap="round"/></svg>
<div style="left:1119px;top:258px;width:435px;height:28px;border:1px dashed #a4a4a4;box-sizing:border-box;"></div>
<div style="left:1122px;top:262px;width:108px;height:20px;border:1px dashed #a4a4a4;box-sizing:border-box;"></div>
<span class="t" style="top:263px;line-height:20px;height:20px;font-size:13px;color:#333;transform:scaleX(0.9222);transform-origin:0 50%;left:1124px;">Namenstitel</span>
<div style="left:1242px;top:261px;width:309px;height:22px;background:#fff;border:1px solid #e2e2e2;box-sizing:border-box;"></div>
<div style="left:1242px;top:261px;width:309px;height:22px;border:1px dashed #b4b4b4;box-sizing:border-box;"></div>
<svg style="left:1532.2px;top:265.7px;" width="12" height="12" viewBox="0 0 12 12"><circle cx="8" cy="5" r="3.3" fill="none" stroke="#33459e" stroke-width="1.4"/><path d="M5.5 7.5 L2.2 11" stroke="#2c3f98" stroke-width="2.2" stroke-linecap="round"/></svg>
<div style="left:1119px;top:288px;width:435px;height:28px;border:1px dashed #a4a4a4;box-sizing:border-box;"></div>
<div style="left:1122px;top:292px;width:108px;height:20px;border:1px dashed #a4a4a4;box-sizing:border-box;"></div>
<span class="t" style="top:293px;line-height:20px;height:20px;font-size:13px;color:#333;transform:scaleX(0.9053);transform-origin:0 50%;left:1124px;">Nachname / Firma</span>
<div style="left:1242px;top:291px;width:309px;height:22px;background:#fff;border:1px solid #e2e2e2;box-sizing:border-box;"></div>
<div style="left:1242px;top:291px;width:309px;height:22px;border:1px dashed #b4b4b4;box-sizing:border-box;"></div>
<div style="left:1119px;top:318px;width:435px;height:28px;border:1px dashed #a4a4a4;box-sizing:border-box;"></div>
<div style="left:1122px;top:322px;width:108px;height:20px;border:1px dashed #a4a4a4;box-sizing:border-box;"></div>
<span class="t" style="top:323px;line-height:20px;height:20px;font-size:13px;color:#333;transform:scaleX(0.8987);transform-origin:0 50%;left:1124px;">Vorname / Zusatz 1</span>
<div style="left:1242px;top:321px;width:309px;height:22px;background:#fff;border:1px solid #e2e2e2;box-sizing:border-box;"></div>
<div style="left:1242px;top:321px;width:309px;height:22px;border:1px dashed #b4b4b4;box-sizing:border-box;"></div>
<div style="left:1119px;top:348px;width:435px;height:28px;border:1px dashed #a4a4a4;box-sizing:border-box;"></div>
<div style="left:1122px;top:352px;width:108px;height:20px;border:1px dashed #a4a4a4;box-sizing:border-box;"></div>
<span class="t" style="top:353px;line-height:20px;height:20px;font-size:13px;color:#333;transform:scaleX(0.8886);transform-origin:0 50%;left:1124px;">Zusatz / Zusatz 2</span>
<div style="left:1242px;top:351px;width:309px;height:22px;background:#fff;border:1px solid #e2e2e2;box-sizing:border-box;"></div>
<div style="left:1242px;top:351px;width:309px;height:22px;border:1px dashed #b4b4b4;box-sizing:border-box;"></div>
<div style="left:1119px;top:378px;width:435px;height:28px;border:1px dashed #a4a4a4;box-sizing:border-box;"></div>
<div style="left:1122px;top:382px;width:108px;height:20px;border:1px dashed #a4a4a4;box-sizing:border-box;"></div>
<span class="t" style="top:383px;line-height:20px;height:20px;font-size:13px;color:#333;transform:scaleX(0.8918);transform-origin:0 50%;left:1124px;">Compliance Status</span>
<div style="left:1242px;top:381px;width:309px;height:22px;background:#fff;border:1px solid #e2e2e2;box-sizing:border-box;"></div>
<div style="left:1242px;top:381px;width:309px;height:22px;border:1px dashed #b4b4b4;box-sizing:border-box;"></div>
<svg style="left:1532.2px;top:385.7px;" width="12" height="12" viewBox="0 0 12 12"><circle cx="8" cy="5" r="3.3" fill="none" stroke="#33459e" stroke-width="1.4"/><path d="M5.5 7.5 L2.2 11" stroke="#2c3f98" stroke-width="2.2" stroke-linecap="round"/></svg>
<div style="left:1119px;top:424px;width:435px;height:28px;border:1px dashed #a4a4a4;box-sizing:border-box;"></div>
<div style="left:1122px;top:428px;width:108px;height:20px;border:1px dashed #a4a4a4;box-sizing:border-box;"></div>
<span class="t" style="top:429px;line-height:20px;height:20px;font-size:13px;color:#333;transform:scaleX(0.8945);transform-origin:0 50%;left:1124px;">Geschäftspartner</span>
<div style="left:1242px;top:427px;width:309px;height:22px;background:#fff;border:1px solid #e2e2e2;box-sizing:border-box;"></div>
<div style="left:1242px;top:427px;width:309px;height:22px;border:1px dashed #b4b4b4;box-sizing:border-box;"></div>
<svg style="left:1532.2px;top:431.7px;" width="12" height="12" viewBox="0 0 12 12"><circle cx="8" cy="5" r="3.3" fill="none" stroke="#33459e" stroke-width="1.4"/><path d="M5.5 7.5 L2.2 11" stroke="#2c3f98" stroke-width="2.2" stroke-linecap="round"/></svg>
<div style="left:1119px;top:454px;width:435px;height:28px;border:1px dashed #a4a4a4;box-sizing:border-box;"></div>
<div style="left:1122px;top:458px;width:108px;height:20px;border:1px dashed #a4a4a4;box-sizing:border-box;"></div>
<span class="t" style="top:459px;line-height:20px;height:20px;font-size:13px;color:#333;transform:scaleX(0.9334);transform-origin:0 50%;left:1124px;">Abteilung</span>
<div style="left:1242px;top:457px;width:118px;height:22px;background:#fff;border:1px solid #e2e2e2;box-sizing:border-box;"></div>
<div style="left:1242px;top:457px;width:118px;height:22px;border:1px dashed #b4b4b4;box-sizing:border-box;"></div>
<svg style="left:1341.2px;top:461.7px;" width="12" height="12" viewBox="0 0 12 12"><circle cx="8" cy="5" r="3.3" fill="none" stroke="#33459e" stroke-width="1.4"/><path d="M5.5 7.5 L2.2 11" stroke="#2c3f98" stroke-width="2.2" stroke-linecap="round"/></svg>
<div style="left:1372px;top:457px;width:179px;height:22px;background:#fff;border:1px solid #e2e2e2;box-sizing:border-box;"></div>
<div style="left:1372px;top:457px;width:179px;height:22px;border:1px dashed #b4b4b4;box-sizing:border-box;"></div>
<div style="left:1119px;top:484px;width:435px;height:28px;border:1px dashed #a4a4a4;box-sizing:border-box;"></div>
<div style="left:1122px;top:488px;width:108px;height:20px;border:1px dashed #a4a4a4;box-sizing:border-box;"></div>
<span class="t" style="top:489px;line-height:20px;height:20px;font-size:13px;color:#333;transform:scaleX(0.8664);transform-origin:0 50%;left:1124px;">Zusatz</span>
<div style="left:1242px;top:487px;width:309px;height:22px;background:#fff;border:1px solid #e2e2e2;box-sizing:border-box;"></div>
<div style="left:1242px;top:487px;width:309px;height:22px;border:1px dashed #b4b4b4;box-sizing:border-box;"></div>
<div style="left:1119px;top:514px;width:435px;height:28px;border:1px dashed #a4a4a4;box-sizing:border-box;"></div>
<div style="left:1122px;top:518px;width:108px;height:20px;border:1px dashed #a4a4a4;box-sizing:border-box;"></div>
<span class="t" style="top:519px;line-height:20px;height:20px;font-size:13px;color:#333;transform:scaleX(0.9125);transform-origin:0 50%;left:1124px;">Funktion</span>
<div style="left:1242px;top:517px;width:118px;height:22px;background:#fff;border:1px solid #e2e2e2;box-sizing:border-box;"></div>
<div style="left:1242px;top:517px;width:118px;height:22px;border:1px dashed #b4b4b4;box-sizing:border-box;"></div>
<svg style="left:1341.2px;top:521.7px;" width="12" height="12" viewBox="0 0 12 12"><circle cx="8" cy="5" r="3.3" fill="none" stroke="#33459e" stroke-width="1.4"/><path d="M5.5 7.5 L2.2 11" stroke="#2c3f98" stroke-width="2.2" stroke-linecap="round"/></svg>
<div style="left:1372px;top:517px;width:179px;height:22px;background:#fff;border:1px solid #e2e2e2;box-sizing:border-box;"></div>
<div style="left:1372px;top:517px;width:179px;height:22px;border:1px dashed #b4b4b4;box-sizing:border-box;"></div>
<div style="left:1119px;top:564px;width:435px;height:28px;border:1px dashed #a4a4a4;box-sizing:border-box;"></div>
<div style="left:1122px;top:568px;width:108px;height:20px;border:1px dashed #a4a4a4;box-sizing:border-box;"></div>
<span class="t" style="top:569px;line-height:20px;height:20px;font-size:13px;color:#333;transform:scaleX(0.9117);transform-origin:0 50%;left:1124px;">Geburtsdatum</span>
<div style="left:1242px;top:567px;width:83px;height:22px;background:#fff;border:1px solid #e2e2e2;border-right-color:#d6d6d6;box-sizing:border-box;"></div>
<div style="left:1242px;top:567px;width:309px;height:22px;border:1px dashed #b4b4b4;box-sizing:border-box;"></div>
<svg style="left:1330.7px;top:571.2px;" width="10.6" height="13" viewBox="0 0 10.6 13"><rect x="0.2" y="1" width="10.4" height="12" rx="0.8" fill="#4a5db2"/><rect x="0.2" y="1" width="10.4" height="3.4" rx="0.8" fill="#2a3d96"/><rect x="2.1" y="0" width="1.4" height="2" fill="#2a3d96"/><rect x="7.3" y="0" width="1.4" height="2" fill="#2a3d96"/><circle cx="2.8" cy="2.4" r="0.7" fill="#dfe4f6"/><circle cx="8" cy="2.4" r="0.7" fill="#dfe4f6"/><rect x="1.3" y="5.3" width="2.1" height="1.9" fill="#fff"/><rect x="4.2" y="5.3" width="2.1" height="1.9" fill="#fff"/><rect x="7.1" y="5.3" width="2.1" height="1.9" fill="#fff"/><rect x="1.3" y="7.9" width="2.1" height="1.9" fill="#fff"/><rect x="4.2" y="7.9" width="2.1" height="1.9" fill="#fff"/><rect x="7.1" y="7.9" width="2.1" height="1.9" fill="#fff"/><rect x="1.3" y="10.5" width="2.1" height="1.9" fill="#fff"/><rect x="4.2" y="10.5" width="2.1" height="1.9" fill="#fff"/><rect x="7.1" y="10.5" width="2.1" height="1.9" fill="#fff"/></svg>
<div style="left:1119px;top:594px;width:435px;height:28px;border:1px dashed #a4a4a4;box-sizing:border-box;"></div>
<div style="left:1122px;top:598px;width:108px;height:20px;border:1px dashed #a4a4a4;box-sizing:border-box;"></div>
<span class="t" style="top:599px;line-height:20px;height:20px;font-size:13px;color:#333;transform:scaleX(0.8633);transform-origin:0 50%;left:1124px;">Sprache</span>
<div style="left:1242px;top:597px;width:309px;height:22px;background:#fff;border:1px solid #e2e2e2;box-sizing:border-box;"></div>
<div style="left:1242px;top:597px;width:309px;height:22px;border:1px dashed #b4b4b4;box-sizing:border-box;"></div>
<svg style="left:1532.2px;top:601.7px;" width="12" height="12" viewBox="0 0 12 12"><circle cx="8" cy="5" r="3.3" fill="none" stroke="#33459e" stroke-width="1.4"/><path d="M5.5 7.5 L2.2 11" stroke="#2c3f98" stroke-width="2.2" stroke-linecap="round"/></svg>
<div style="left:1119px;top:408px;width:435px;height:14px;border:1px dashed #a4a4a4;box-sizing:border-box;"></div>
<div style="left:1119px;top:624px;width:435px;height:14px;border:1px dashed #a4a4a4;box-sizing:border-box;"></div>
<div style="left:1119px;top:640px;width:435px;height:0px;border-top:1px dashed #a4a4a4;"></div>
<div style="left:1122px;top:641px;width:118px;height:20px;border:1px dashed #a4a4a4;box-sizing:border-box;"></div>
<span class="t" style="top:642px;line-height:20px;height:20px;font-size:13px;color:#333;transform:scaleX(0.8702);transform-origin:0 50%;left:1124px;">Adresse</span>
<div style="left:1121px;top:664px;width:437px;height:75px;background:#fff;border:1px solid #e0e0e0;box-sizing:border-box;"></div>
<div style="left:1122px;top:665px;width:430px;height:67px;border:1px dashed #b4b4b4;box-sizing:border-box;"></div>
<div style="left:1619px;top:148px;width:300px;height:796px;background:#fdfdfd;"></div>
<div style="left:1619px;top:148px;width:1px;height:796px;background:#bdbdbd;"></div>
<div style="left:1620px;top:148px;width:299px;height:35px;background:#e4e4e4;"></div>
<div style="left:1620px;top:183px;width:299px;height:1px;background:#b8b8b8;"></div>
<svg style="left:1639px;top:159px;" width="13" height="13" viewBox="0 0 13 13"><g transform="translate(6.5 6.5)"><path d="M-1.25 -4.43 L-1.15 -5.79 L1.15 -5.79 L1.25 -4.43 L2.25 -4.01 L3.28 -4.91 L4.91 -3.28 L4.01 -2.25 L4.43 -1.25 L5.79 -1.15 L5.79 1.15 L4.43 1.25 L4.01 2.25 L4.91 3.28 L3.28 4.91 L2.25 4.01 L1.25 4.43 L1.15 5.79 L-1.15 5.79 L-1.25 4.43 L-2.25 4.01 L-3.28 4.91 L-4.91 3.28 L-4.01 2.25 L-4.43 1.25 L-5.79 1.15 L-5.79 -1.15 L-4.43 -1.25 L-4.01 -2.25 L-4.91 -3.28 L-3.28 -4.91 L-2.25 -4.01Z" fill="#111"/><circle r="1.9" fill="#e4e4e4"/></g></svg>
<span class="t" style="top:157px;line-height:20px;height:20px;font-size:12px;color:#222;letter-spacing:0.86px;left:1662.5px;">Einstellungen</span>
<span class="t" style="top:204px;line-height:20px;height:20px;font-size:13.5px;color:#111;transform:scaleX(0.9689);transform-origin:0 50%;left:1635.3px;">Komponententyp</span>
<span class="t" style="top:241px;line-height:20px;height:20px;font-size:13.5px;color:#111;transform:scaleX(0.9414);transform-origin:0 50%;left:1635.3px;">Name</span>
<span class="t" style="top:278px;line-height:20px;height:20px;font-size:13.5px;color:#111;transform:scaleX(0.9308);transform-origin:0 50%;left:1635.3px;">Systemstandard</span>
<span class="t" style="top:316px;line-height:20px;height:20px;font-size:13.5px;color:#111;transform:scaleX(0.9453);transform-origin:0 50%;left:1635.3px;">Vert. vergrößern</span>
<span class="t" style="top:354px;line-height:20px;height:20px;font-size:13.5px;color:#111;transform:scaleX(0.9869);transform-origin:0 50%;left:1635.3px;">Infoboard</span>
<div style="left:1770px;top:199px;width:135px;height:27px;background:#fff;border:1px solid #dcdcdc;border-radius:2px;box-sizing:border-box;"></div>
<span class="t" style="top:202px;line-height:20px;height:20px;font-size:14px;color:#a9a9a9;transform:scaleX(0.9432);transform-origin:0 50%;left:1776.3px;">Infoboard</span>
<div style="left:1770px;top:236px;width:135px;height:27px;background:#fff;border:1px solid #dcdcdc;border-radius:2px;box-sizing:border-box;"></div>
<span class="t" style="top:239px;line-height:20px;height:20px;font-size:14px;color:#a9a9a9;transform:scaleX(0.9443);transform-origin:0 50%;left:1776.3px;">webViewBoard101</span>
<div style="left:1770px;top:278px;width:17px;height:17px;background:#fff;border:1px solid #dcdcdc;border-radius:2px;box-sizing:border-box;"></div>
<div style="left:1770px;top:316px;width:17px;height:17px;background:#fff;border:1px solid #dcdcdc;border-radius:2px;box-sizing:border-box;"></div>
<svg style="left:1770px;top:316px;" width="16" height="16" viewBox="0 0 16 16"><path d="M2.8 8.8 L6.4 12.2 L13.6 3.8" fill="none" stroke="#111" stroke-width="2"/></svg>
<div style="left:1770px;top:349px;width:135px;height:27px;background:#c8c8c8;border-radius:2px;"></div>
<span class="t" style="top:353px;line-height:20px;height:20px;font-size:14px;color:#111;transform:scaleX(0.9215);transform-origin:0 50%;left:1806.3px;">Bearbeiten</span>
<div style="left:1620px;top:391px;width:299px;height:37px;background:#e4e4e4;"></div>
<div style="left:1620px;top:391px;width:299px;height:1px;background:#b8b8b8;"></div>
<div style="left:1620px;top:427px;width:299px;height:1px;background:#b8b8b8;"></div>
<svg style="left:1644px;top:408px;" width="9" height="5" viewBox="0 0 9 5"><path d="M0.4 0 H8.2 L4.3 4.6Z" fill="#111"/></svg>
<span class="t" style="top:401px;line-height:20px;height:20px;font-size:12px;color:#222;letter-spacing:0.96px;left:1662.3px;">Dimension</span>
<span class="t" style="top:443px;line-height:20px;height:20px;font-size:13.5px;color:#111;transform:scaleX(0.9754);transform-origin:0 50%;left:1630.3px;">Mindesthöhe</span>
<div style="left:1630px;top:463px;width:135px;height:29px;background:#fff;border:1px solid #dcdcdc;border-radius:2px;box-sizing:border-box;"></div>
<span class="t" style="top:469px;line-height:20px;height:20px;font-size:13.5px;color:#8a8a8a;transform:scaleX(0.9496);transform-origin:0 50%;left:1636px;">50px</span>
<div style="left:1740px;top:477px;width:5px;height:1px;background:#333;"></div>
<svg style="left:1751.5px;top:472px;" width="8" height="12" viewBox="0 0 8 12"><path d="M3.8 0.1 L7.5 4.7 H0.1Z M3.8 11.9 L7.5 7.5 H0.1Z" fill="#111"/></svg>
<span class="t" style="top:502px;line-height:20px;height:20px;font-size:13.5px;color:#111;transform:scaleX(0.9488);transform-origin:0 50%;left:1630.3px;">Abstand</span>
<div style="left:1630px;top:522px;width:280px;height:140px;background:#e4e4e4;border:1px solid #b4b4b4;border-radius:2px;box-sizing:border-box;"></div>
<span class="t" style="top:538px;line-height:20px;height:20px;font-size:13.5px;color:#111;transform:scaleX(0.9387);transform-origin:0 50%;left:1641.4px;">Oben</span>
<span class="t" style="top:538px;line-height:20px;height:20px;font-size:13.5px;color:#111;transform:scaleX(0.8759);transform-origin:0 50%;left:1775.3px;">Rechts</span>
<span class="t" style="top:597px;line-height:20px;height:20px;font-size:13.5px;color:#111;transform:scaleX(0.9438);transform-origin:0 50%;left:1641.4px;">Unten</span>
<span class="t" style="top:597px;line-height:20px;height:20px;font-size:13.5px;color:#111;transform:scaleX(0.8821);transform-origin:0 50%;left:1775.3px;">Links</span>
<div style="left:1642px;top:559px;width:122px;height:27px;background:#fff;border:1px solid #fff;border-radius:2px;box-sizing:border-box;"></div>
<span class="t" style="top:564px;line-height:20px;height:20px;font-size:13.5px;color:#8a8a8a;transform:scaleX(0.951);transform-origin:0 50%;left:1647.2px;">0px</span>
<div style="left:1740px;top:573px;width:5px;height:1px;background:#333;"></div>
<svg style="left:1751.5px;top:568px;" width="8" height="12" viewBox="0 0 8 12"><path d="M3.8 0.1 L7.5 4.7 H0.1Z M3.8 11.9 L7.5 7.5 H0.1Z" fill="#111"/></svg>
<div style="left:1776px;top:559px;width:122px;height:27px;background:#fff;border:1px solid #fff;border-radius:2px;box-sizing:border-box;"></div>
<span class="t" style="top:564px;line-height:20px;height:20px;font-size:13.5px;color:#8a8a8a;transform:scaleX(0.951);transform-origin:0 50%;left:1781.2px;">0px</span>
<div style="left:1874px;top:573px;width:5px;height:1px;background:#333;"></div>
<svg style="left:1885.6px;top:568px;" width="8" height="12" viewBox="0 0 8 12"><path d="M3.8 0.1 L7.5 4.7 H0.1Z M3.8 11.9 L7.5 7.5 H0.1Z" fill="#111"/></svg>
<div style="left:1642px;top:618px;width:122px;height:27px;background:#fff;border:1px solid #fff;border-radius:2px;box-sizing:border-box;"></div>
<span class="t" style="top:623px;line-height:20px;height:20px;font-size:13.5px;color:#8a8a8a;transform:scaleX(0.951);transform-origin:0 50%;left:1647.2px;">0px</span>
<div style="left:1740px;top:632px;width:5px;height:1px;background:#333;"></div>
<svg style="left:1751.5px;top:627px;" width="8" height="12" viewBox="0 0 8 12"><path d="M3.8 0.1 L7.5 4.7 H0.1Z M3.8 11.9 L7.5 7.5 H0.1Z" fill="#111"/></svg>
<div style="left:1776px;top:618px;width:122px;height:27px;background:#fff;border:1px solid #fff;border-radius:2px;box-sizing:border-box;"></div>
<span class="t" style="top:623px;line-height:20px;height:20px;font-size:13.5px;color:#8a8a8a;transform:scaleX(0.951);transform-origin:0 50%;left:1781.2px;">0px</span>
<div style="left:1874px;top:632px;width:5px;height:1px;background:#333;"></div>
<svg style="left:1885.6px;top:627px;" width="8" height="12" viewBox="0 0 8 12"><path d="M3.8 0.1 L7.5 4.7 H0.1Z M3.8 11.9 L7.5 7.5 H0.1Z" fill="#111"/></svg>
<div style="left:1620px;top:687px;width:300px;height:57px;background:#fff199;border:1px solid #222;box-sizing:border-box;"></div>
<span class="t" style="top:689px;line-height:20px;height:20px;font-size:14px;color:#111;transform:scaleX(0.9257);transform-origin:0 50%;left:1672.75px;"><b>Achtung:</b> Abweichungen von den</span>
<span class="t" style="top:706px;line-height:20px;height:20px;font-size:14px;color:#111;transform:scaleX(0.923);transform-origin:0 50%;left:1632.1px;">Grundeinstellungen werden im Rich Client <b>nicht</b></span>
<span class="t" style="top:723px;line-height:20px;height:20px;font-size:14px;color:#111;transform:scaleX(0.9298);transform-origin:0 50%;left:1728.4px;">berücksichtigt!</span>
</body></html>
